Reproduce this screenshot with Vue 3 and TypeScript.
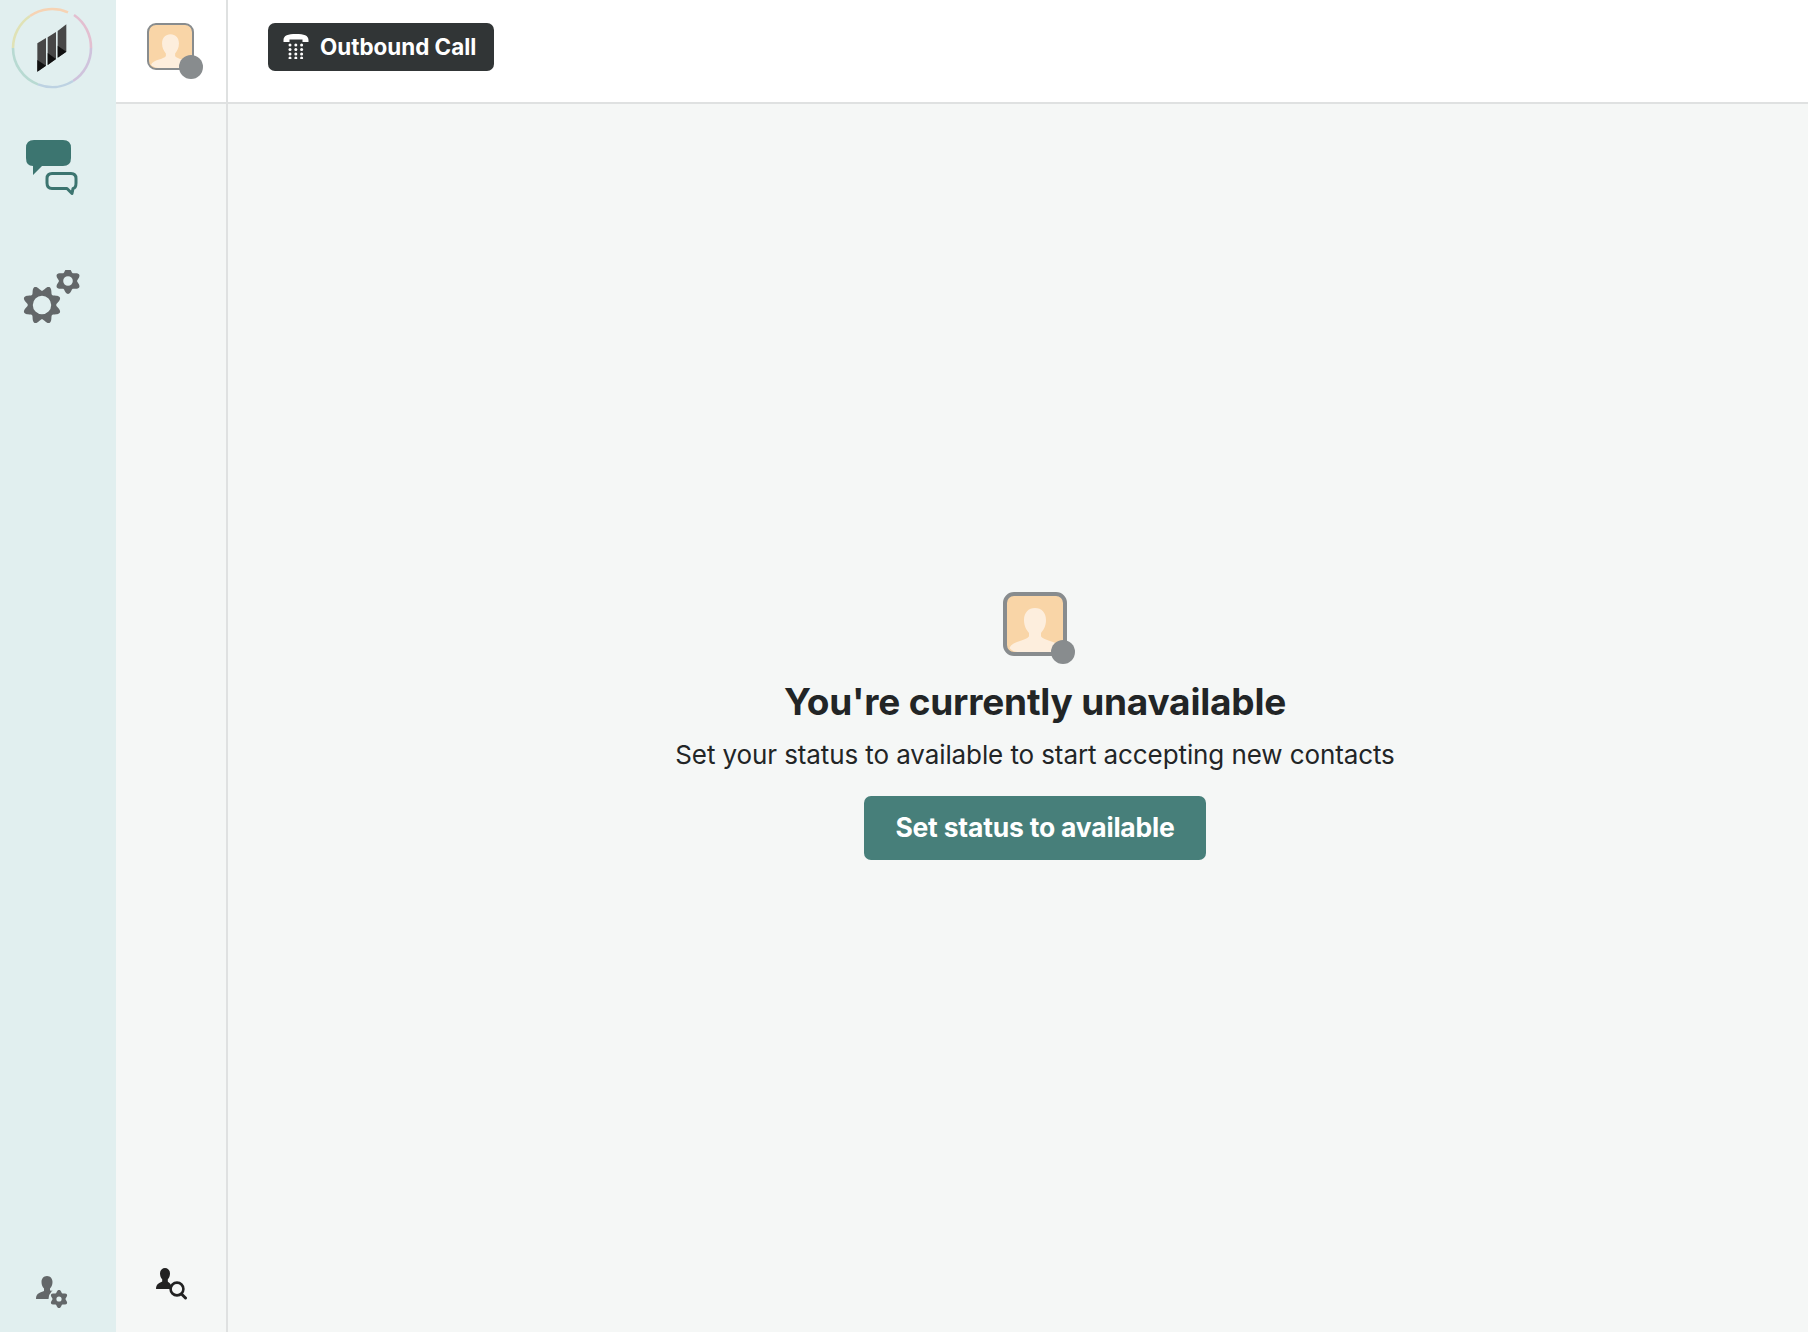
<script setup lang="ts">
// rounded gear outline: radius swings between the tooth tips and the valleys
const gearPath = (
  cx: number,
  cy: number,
  radius: number,
  swing: number,
  teeth: number,
  hole: number,
  phase = 0,
) => {
  const points: string[] = [];
  for (let i = 0; i < 160; i++) {
    const angle = (i / 160) * Math.PI * 2;
    const r = radius + swing * Math.cos(teeth * angle + phase);
    points.push(`${(cx + r * Math.sin(angle)).toFixed(2)} ${(cy - r * Math.cos(angle)).toFixed(2)}`);
  }
  const ring = `M${cx - hole} ${cy}a${hole} ${hole} 0 1 0 ${hole * 2} 0a${hole} ${hole} 0 1 0 ${-hole * 2} 0z`;
  return `M${points.join("L")}z${ring}`;
};

const bigGear = gearPath(22, 35, 16.8, 2.6, 8, 9.2, Math.PI);
const smallGear = gearPath(48, 11, 11, 1.9, 6, 4.8);
const userGear = gearPath(23, 23, 7.8, 1.3, 6, 2.6);

const ringSegments = [
  { d: "M74 15 A39 39 0 0 1 91 48", color: "#e3bfd0" },
  { d: "M91 48 A39 39 0 0 1 73 81", color: "#cfc3dc" },
  { d: "M73 81 A39 39 0 0 1 38 84.4", color: "#bdd2e2" },
  { d: "M38 84.4 A39 39 0 0 1 13 48", color: "#b8dad2" },
  { d: "M13 48 A39 39 0 0 1 30 16", color: "#e0e2b6" },
  { d: "M30 16 A39 39 0 0 1 68 12.4", color: "#f6d3b4" },
];

const keypadDots = [12, 16.5, 21, 25].flatMap((y) =>
  [7, 12.8, 18.6].map((x) => ({ x, y })),
);

const silhouette =
  "M32 16C25.5 16 21 20.5 21 28C21 34 23.5 38 26 41V44C26 46 20 48 14 50C8 52 5 56 4 64H60C59 56 56 52 50 50C44 48 38 46 38 44V41C40.5 38 43 34 43 28C43 20.5 38.5 16 32 16Z";
</script>

<template>
  <div class="app">
    <nav class="rail">
      <svg class="logo" width="104" height="96" viewBox="0 0 104 96" aria-label="Logo">
        <path
          v-for="seg in ringSegments"
          :key="seg.d"
          :d="seg.d"
          :stroke="seg.color"
          stroke-width="2.6"
          fill="none"
        />
        <g transform="scale(0.3333)">
          <polygon points="112,130 138,114 138,197 112,215" fill="#474747" />
          <polygon points="112,180 138,197 112,215" fill="#111" />
          <polygon points="143,112 168,96 168,177 143,195" fill="#474747" />
          <polygon points="143,159 168,177 143,195" fill="#111" />
          <polygon points="173,93 199,73 199,155 173,173" fill="#474747" />
          <polygon points="173,137 199,155 173,173" fill="#111" />
        </g>
      </svg>

      <svg class="chat-icon" width="54" height="58" viewBox="0 0 54 58" aria-label="Conversations">
        <path
          d="M8 0H37Q45 0 45 8V18Q45 26 37 26H16L7 35V26Q0 26 0 18V8Q0 0 8 0Z"
          fill="#3c7570"
        />
        <path
          d="M26 33.5H45Q50 33.5 50 38.5V43Q50 48 47 48.5L46 53.5L41 48.5H26Q21 48.5 21 43V38.5Q21 33.5 26 33.5Z"
          fill="none"
          stroke="#3c7570"
          stroke-width="3"
          stroke-linejoin="round"
        />
      </svg>

      <svg class="gear-icon" width="64" height="56" viewBox="0 0 64 56" aria-label="Settings">
        <path :d="bigGear" fill="#636769" fill-rule="evenodd" />
        <path :d="smallGear" fill="#636769" fill-rule="evenodd" />
      </svg>

      <svg class="user-gear" width="36" height="36" viewBox="0 0 36 36" aria-label="Profile settings">
        <path
          d="M11 0C7.5 0 5.5 2.8 5.5 6C5.5 9 6.5 11 8 12.5V15C5 16.5 0 17 0 22.5V23H17L18 15L14 14.5V12.5C15.5 11 16.5 9 16.5 6C16.5 2.8 14.5 0 11 0Z"
          fill="#636769"
        />
        <circle cx="23" cy="23" r="10.5" fill="#e1efef" />
        <path :d="userGear" fill="#636769" fill-rule="evenodd" />
      </svg>
    </nav>

    <div class="workspace">
      <header class="topbar">
        <div class="topbar-avatar">
          <div class="avatar avatar-small">
            <svg viewBox="4 4 56 56" width="100%" height="100%">
              <path :d="silhouette" fill="#fdeedd" />
            </svg>
            <span class="status-dot"></span>
          </div>
        </div>
        <div class="topbar-actions">
          <button class="outbound-btn" type="button">
            <svg width="26" height="26" viewBox="0 0 26 26">
              <path
                d="M0.5 7C0.5 2.5 5 1 13 1C21 1 25.5 2.5 25.5 7V9H19.5V6.5H6.5V9H0.5Z"
                fill="#fff"
              />
              <circle
                v-for="dot in keypadDots"
                :key="`${dot.x}-${dot.y}`"
                :cx="dot.x"
                :cy="dot.y"
                r="1.5"
                fill="#fff"
              />
            </svg>
            Outbound Call
          </button>
        </div>
      </header>

      <div class="body">
        <aside class="side">
          <svg width="32" height="32" viewBox="0 0 32 32" aria-label="Find user">
            <path
              d="M9 0C6 0 4 2.4 4 5.4C4 8 5 10 6.2 11.2V13.5C4 15 0 15.5 0 21H15C15 19 15.5 17 14 15.5C13 14.5 12 14 11.8 13.5V11.2C13 10 14 8 14 5.4C14 2.4 12 0 9 0Z"
              fill="#222"
            />
            <circle cx="21" cy="21" r="6.4" fill="none" stroke="#222" stroke-width="2.6" />
            <path d="M25.5 26L29.5 30" stroke="#222" stroke-width="3" stroke-linecap="round" />
          </svg>
        </aside>

        <main class="main">
          <div class="avatar avatar-large">
            <svg viewBox="4 4 56 56" width="100%" height="100%">
              <path :d="silhouette" fill="#fdeedd" />
            </svg>
            <span class="status-dot"></span>
          </div>
          <h1>You're currently unavailable</h1>
          <p>Set your status to available to start accepting new contacts</p>
          <button class="status-btn" type="button">Set status to available</button>
        </main>
      </div>
    </div>
  </div>
</template>

<style>
html,
body {
  margin: 0;
  height: 100%;
}
</style>

<style scoped>
.app {
  display: flex;
  height: 1332px;
  overflow: hidden;
  font-family: "Inter", "Lato", sans-serif;
  color: #222526;
  background: #f5f7f6;
}

.rail {
  position: relative;
  flex: 0 0 116px;
  display: flex;
  flex-direction: column;
  background: #e1efef;
}

.logo {
  display: block;
}

.chat-icon {
  display: block;
  margin: 44px 0 0 26px;
}

.gear-icon {
  display: block;
  margin: 72px 0 0 20px;
}

.user-gear {
  display: block;
  margin: auto 0 20px 36px;
}

.workspace {
  flex: 1;
  display: flex;
  flex-direction: column;
  min-width: 0;
}

.topbar {
  flex: 0 0 104px;
  box-sizing: border-box;
  display: flex;
  background: #fff;
  border-bottom: 2px solid #dfe1e1;
}

.topbar-avatar {
  flex: 0 0 112px;
  box-sizing: border-box;
  padding: 23px 0 0 31px;
  border-right: 2px solid #dfe1e1;
}

.topbar-actions {
  padding: 23px 0 0 40px;
}

.outbound-btn {
  display: flex;
  align-items: center;
  gap: 11px;
  box-sizing: border-box;
  width: 226px;
  height: 48px;
  padding: 0 0 2px 15px;
  border: 0;
  border-radius: 7px;
  background: #313536;
  color: #fff;
  font: 700 22.4px "Inter", "Lato", sans-serif;
  white-space: nowrap;
  cursor: pointer;
}

.avatar {
  position: relative;
  box-sizing: border-box;
  background: #f9d5a7;
  border-style: solid;
  border-color: #888c8e;
}

.avatar svg {
  display: block;
  border-radius: inherit;
}

.avatar-small {
  width: 47px;
  height: 47px;
  border-width: 2.5px;
  border-radius: 9px;
}

.avatar-large {
  width: 64px;
  height: 64px;
  border-width: 4px;
  border-radius: 11px;
}

.status-dot {
  position: absolute;
  width: 24px;
  height: 24px;
  border-radius: 50%;
  background: #888c8e;
}

.avatar-small .status-dot {
  right: -11px;
  bottom: -11px;
}

.avatar-large .status-dot {
  right: -12px;
  bottom: -12px;
}

.body {
  flex: 1;
  display: flex;
  min-height: 0;
}

.side {
  flex: 0 0 112px;
  box-sizing: border-box;
  display: flex;
  align-items: flex-end;
  padding: 0 0 32px 40px;
  border-right: 2px solid #dfe1e1;
}

.main {
  flex: 1;
  display: flex;
  flex-direction: column;
  align-items: center;
  justify-content: center;
  padding: 15px 0 0 34px;
}

h1 {
  margin: 22px 0 0;
  font-size: 37px;
  line-height: 48px;
  font-weight: 700;
  letter-spacing: -0.2px;
}

p {
  margin: 9px 0 0;
  font-size: 26px;
  line-height: 40px;
  letter-spacing: -0.1px;
}

.status-btn {
  width: 342px;
  height: 64px;
  margin-top: 21px;
  padding-bottom: 2px;
  border: 0;
  border-radius: 7px;
  background: #477f7a;
  color: #fff;
  font: 700 26.5px "Inter", "Lato", sans-serif;
  letter-spacing: -0.2px;
  cursor: pointer;
}
</style>
